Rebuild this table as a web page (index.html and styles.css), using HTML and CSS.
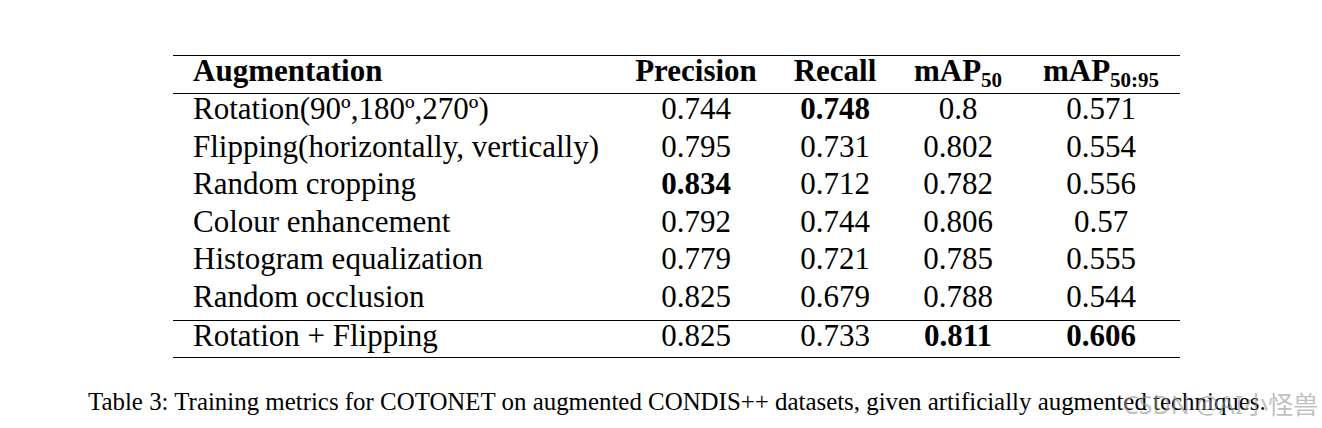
FILE: index.html
```html
<!DOCTYPE html>
<html>
<head>
<meta charset="utf-8">
<link rel="stylesheet" href="styles.css">
</head>
<body>
<div class="page">
  <table class="metrics">
    <colgroup>
      <col class="c-aug">
      <col class="c-prec">
      <col class="c-rec">
      <col class="c-map">
      <col class="c-map2">
    </colgroup>
    <thead>
      <tr>
        <th class="left">Augmentation</th>
        <th>Precision</th>
        <th>Recall</th>
        <th>mAP<sub>50</sub></th>
        <th>mAP<sub>50:95</sub></th>
      </tr>
    </thead>
    <tbody>
      <tr><td class="left">Rotation(90º,180º,270º)</td><td>0.744</td><td><b>0.748</b></td><td>0.8</td><td>0.571</td></tr>
      <tr><td class="left">Flipping(horizontally, vertically)</td><td>0.795</td><td>0.731</td><td>0.802</td><td>0.554</td></tr>
      <tr><td class="left">Random cropping</td><td><b>0.834</b></td><td>0.712</td><td>0.782</td><td>0.556</td></tr>
      <tr><td class="left">Colour enhancement</td><td>0.792</td><td>0.744</td><td>0.806</td><td>0.57</td></tr>
      <tr><td class="left">Histogram equalization</td><td>0.779</td><td>0.721</td><td>0.785</td><td>0.555</td></tr>
      <tr><td class="left">Random occlusion</td><td>0.825</td><td>0.679</td><td>0.788</td><td>0.544</td></tr>
      <tr class="final"><td class="left">Rotation + Flipping</td><td>0.825</td><td>0.733</td><td><b>0.811</b></td><td><b>0.606</b></td></tr>
    </tbody>
  </table>
  <p class="caption">Table 3: Training metrics for COTONET on augmented CONDIS++ datasets, given artificially augmented techniques.</p>
  <div class="watermark">CSDN @AI小怪兽</div>
</div>
</body>
</html>
```

FILE: styles.css
```css
html, body {
  margin: 0;
  padding: 0;
  background: #ffffff;
}
.page {
  position: relative;
  width: 1322px;
  height: 428px;
  padding-top: 55px;
  box-sizing: border-box;
  font-family: "Liberation Serif", "Times New Roman", serif;
  color: #000;
  overflow: hidden;
}
.metrics {
  margin-left: 173px;
  width: 1007px;
  border-collapse: collapse;
  table-layout: fixed;
  font-family: "Liberation Serif", "Times New Roman", serif;
  font-size: 31px;
  border-top: 1.5px solid #000;
  border-bottom: 1.5px solid #000;
}
.c-aug { width: 443px; }
.c-prec { width: 160px; }
.c-rec { width: 118px; }
.c-map { width: 128px; }
.c-map2 { width: 158px; }
.metrics th, .metrics td {
  padding: 0 10px;
  height: 37px;
  line-height: 30px;
  text-align: center;
  white-space: nowrap;
  vertical-align: top;
  font-family: "Liberation Serif", "Times New Roman", serif;
}
.metrics th {
  font-weight: bold;
  border-bottom: 1.5px solid #000;
}
.metrics .left {
  text-align: left;
  padding-left: 20px;
}
.metrics tbody td {
  height: 37.6px;
}
.metrics tr.final td {
  border-top: 1.5px solid #000;
  height: 36px;
}
.metrics sub {
  font-size: 21px;
  vertical-align: -6px;
  line-height: 0;
}
.caption {
  margin: 29px 0 0 88px;
  font-size: 24.9px;
  line-height: 30px;
  white-space: nowrap;
}
.watermark {
  position: absolute;
  left: 1123px;
  top: 388px;
  font-family: "Noto Sans", "Noto Sans CJK SC", sans-serif;
  font-size: 25px;
  line-height: 32px;
  color: rgba(150, 150, 150, 0.6);
  white-space: nowrap;
}
```
